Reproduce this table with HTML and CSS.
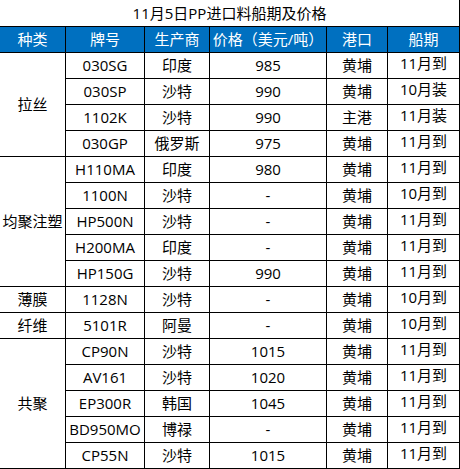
FILE: index.html
```html
<!DOCTYPE html>
<html lang="zh-CN">
<head>
<meta charset="utf-8">
<title>11月5日PP进口料船期及价格</title>
<link rel="stylesheet" href="styles.css">
</head>
<body>
<div class="sheet">
  <div class="cell title">11月5日PP进口料船期及价格</div>

  <div class="cell head">种类</div>
  <div class="cell head">牌号</div>
  <div class="cell head">生产商</div>
  <div class="cell head">价格（美元/吨）</div>
  <div class="cell head">港口</div>
  <div class="cell head">船期</div>

  <div class="cell kind span4">拉丝</div>
  <div class="cell">030SG</div><div class="cell">印度</div><div class="cell">985</div><div class="cell">黄埔</div><div class="cell ship">11月到</div>
  <div class="cell">030SP</div><div class="cell">沙特</div><div class="cell">990</div><div class="cell">黄埔</div><div class="cell ship">10月装</div>
  <div class="cell">1102K</div><div class="cell">沙特</div><div class="cell">990</div><div class="cell">主港</div><div class="cell ship">11月装</div>
  <div class="cell">030GP</div><div class="cell">俄罗斯</div><div class="cell">975</div><div class="cell">黄埔</div><div class="cell ship">11月到</div>

  <div class="cell kind span5">均聚注塑</div>
  <div class="cell">H110MA</div><div class="cell">印度</div><div class="cell">980</div><div class="cell">黄埔</div><div class="cell ship">11月到</div>
  <div class="cell">1100N</div><div class="cell">沙特</div><div class="cell">-</div><div class="cell">黄埔</div><div class="cell ship">10月到</div>
  <div class="cell">HP500N</div><div class="cell">沙特</div><div class="cell">-</div><div class="cell">黄埔</div><div class="cell ship">11月到</div>
  <div class="cell">H200MA</div><div class="cell">印度</div><div class="cell">-</div><div class="cell">黄埔</div><div class="cell ship">11月到</div>
  <div class="cell">HP150G</div><div class="cell">沙特</div><div class="cell">990</div><div class="cell">黄埔</div><div class="cell ship">11月到</div>

  <div class="cell kind">薄膜</div>
  <div class="cell">1128N</div><div class="cell">沙特</div><div class="cell">-</div><div class="cell">黄埔</div><div class="cell ship">10月到</div>

  <div class="cell kind">纤维</div>
  <div class="cell">5101R</div><div class="cell">阿曼</div><div class="cell">-</div><div class="cell">黄埔</div><div class="cell ship">10月到</div>

  <div class="cell kind span5">共聚</div>
  <div class="cell">CP90N</div><div class="cell">沙特</div><div class="cell">1015</div><div class="cell">黄埔</div><div class="cell ship">11月到</div>
  <div class="cell">AV161</div><div class="cell">沙特</div><div class="cell">1020</div><div class="cell">黄埔</div><div class="cell ship">11月到</div>
  <div class="cell">EP300R</div><div class="cell">韩国</div><div class="cell">1045</div><div class="cell">黄埔</div><div class="cell ship">11月到</div>
  <div class="cell">BD950MO</div><div class="cell">博禄</div><div class="cell">-</div><div class="cell">黄埔</div><div class="cell ship">11月到</div>
  <div class="cell">CP55N</div><div class="cell">沙特</div><div class="cell">1015</div><div class="cell">黄埔</div><div class="cell ship">11月到</div>
</div>
</body>
</html>
```

FILE: styles.css
```css
html, body {
  margin: 0;
  padding: 0;
  background: #ffffff;
}

.sheet {
  display: grid;
  grid-template-columns: 65px 78px 64px 116px 60px 71px;
  grid-template-rows: 26px 25px;
  grid-auto-rows: 25px;
  gap: 1px;
  width: 460px;
  box-sizing: border-box;
  padding: 0 1px 1px 0;
  background: #000000;
  font-family: "Open Sans", "Noto Sans CJK SC", sans-serif;
  font-size: 15px;
  color: #000000;
}

.cell {
  display: flex;
  align-items: center;
  justify-content: center;
  background: #ffffff;
  white-space: nowrap;
  line-height: 1;
}

.title {
  grid-column: 1 / -1;
}

.head {
  background: #0070c0;
  color: #ffffff;
}

.kind.span4 {
  grid-row: span 4;
}

.kind.span5 {
  grid-row: span 5;
}

.ship {
  padding-bottom: 4px;
}
```
